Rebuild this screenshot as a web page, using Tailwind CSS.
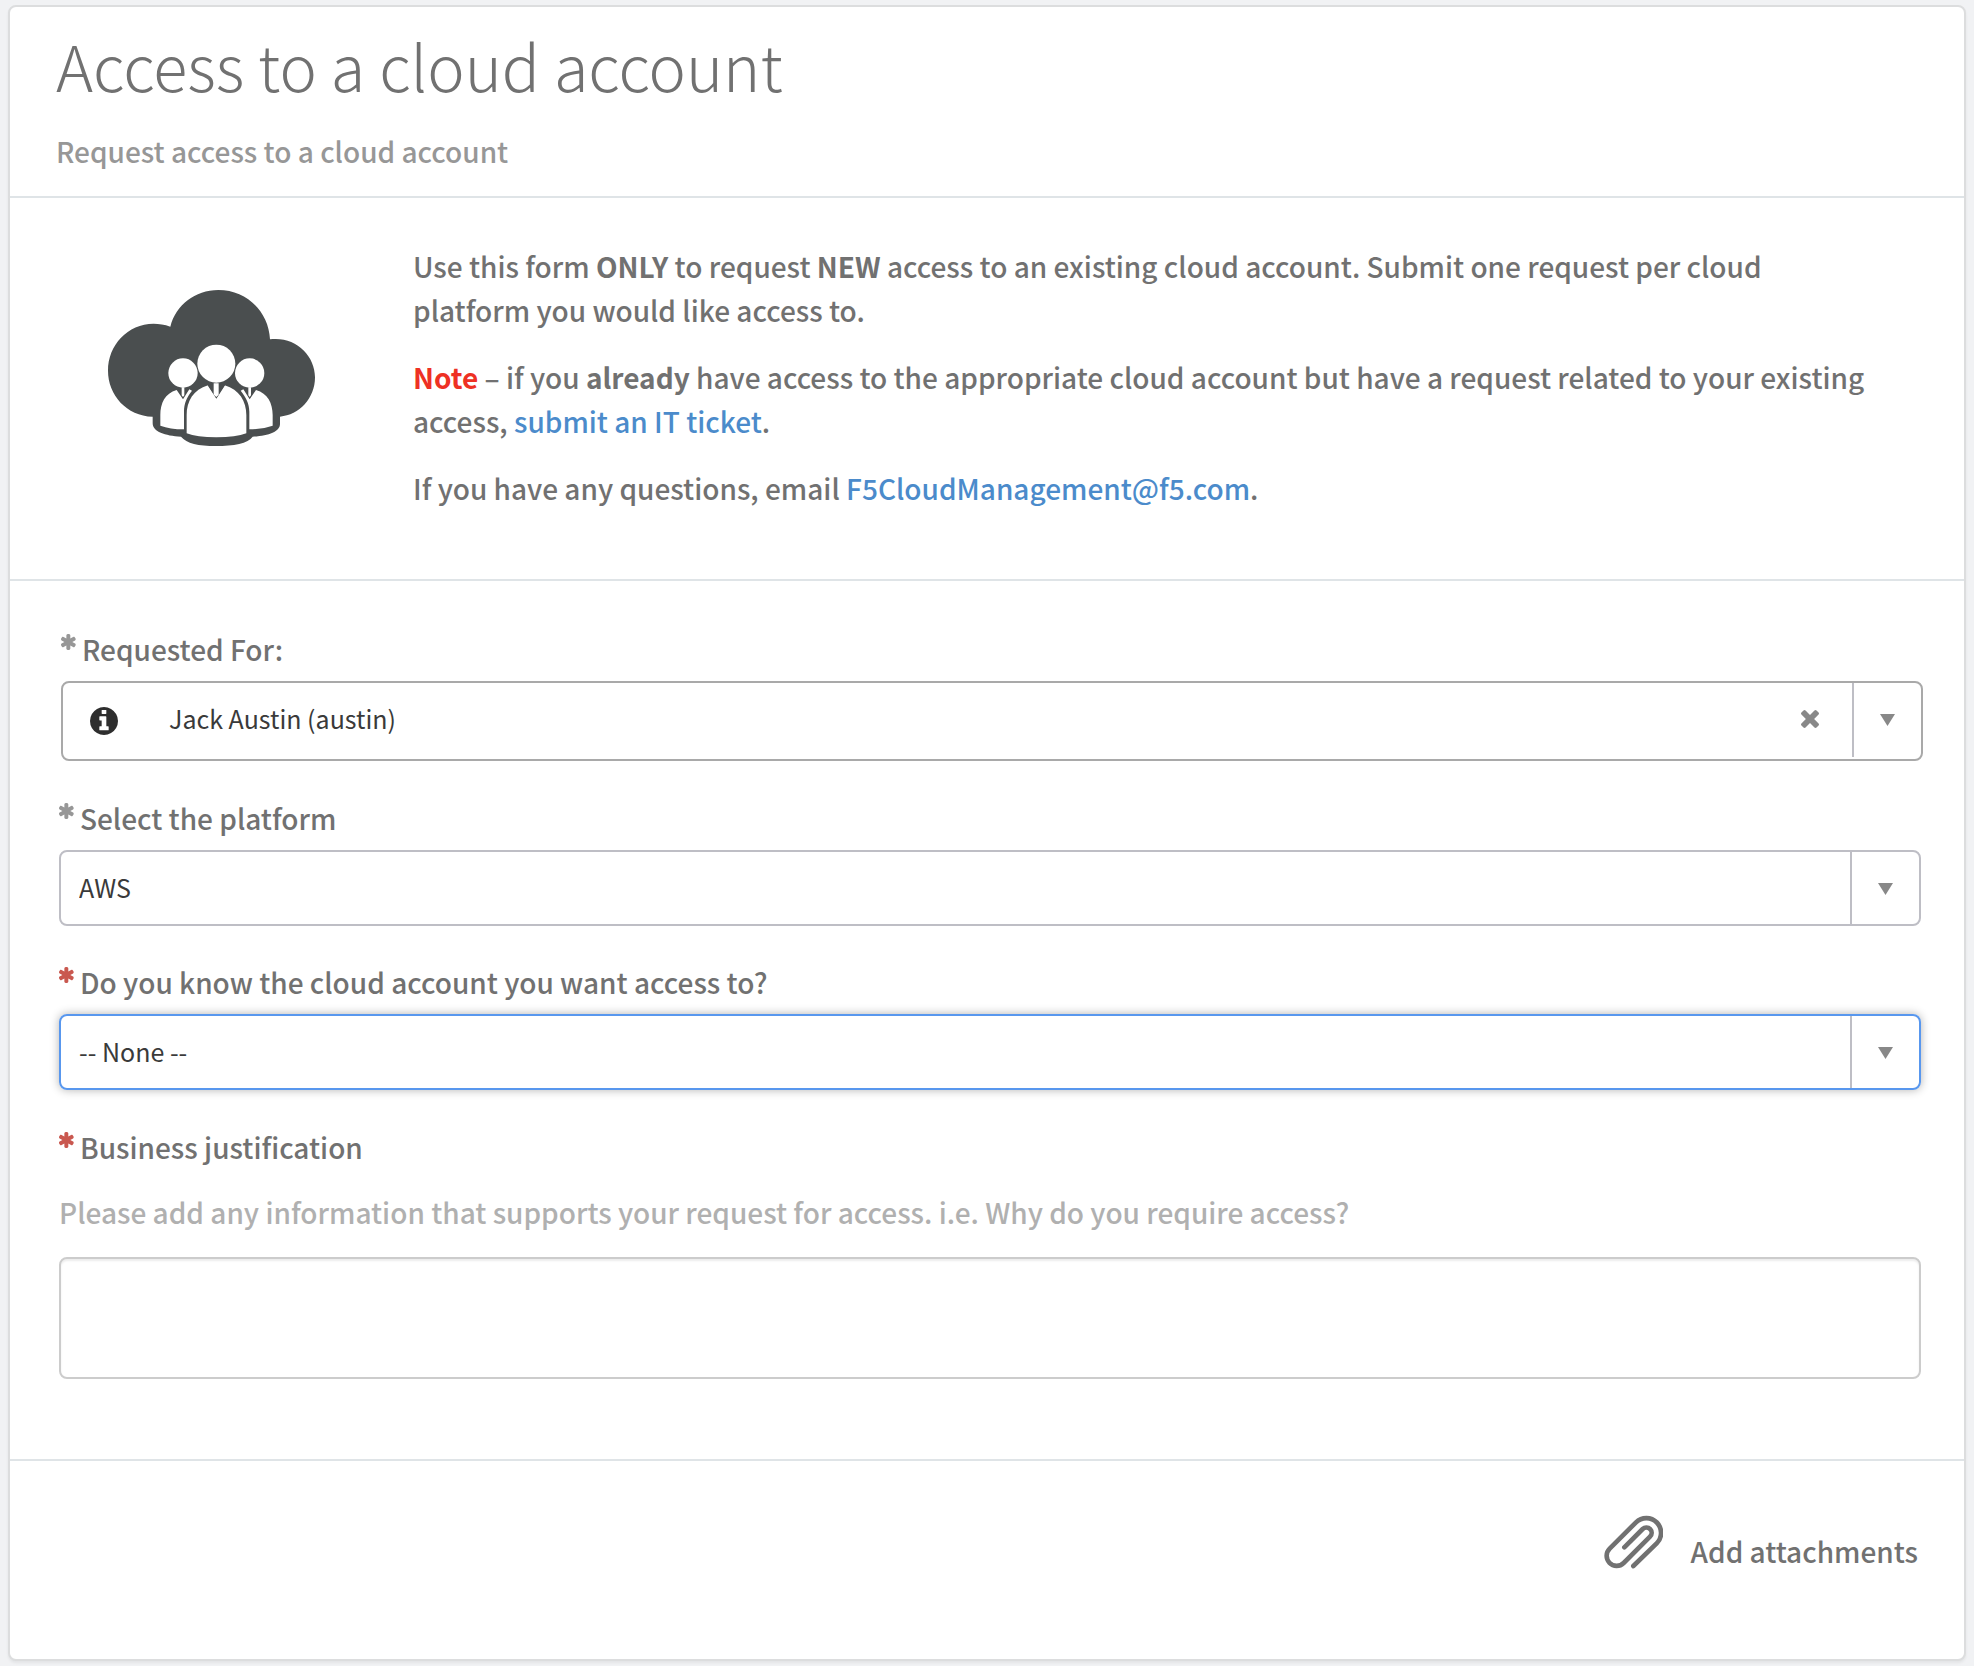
<!DOCTYPE html>
<html lang="en">
<head>
<meta charset="utf-8">
<title>Access to a cloud account</title>
<script src="https://cdn.jsdelivr.net/npm/@tailwindcss/browser@4"></script>
</head>
<body class="min-h-screen bg-[#f1f2f4] px-2 pt-[5px] pb-[5px] font-['Noto_Sans_CJK_SC','Noto_Sans',sans-serif] text-[28px] leading-[44px] font-medium text-[#717171]">
<svg class="hidden" aria-hidden="true">
  <symbol id="asterisk" viewBox="121 128 1550 1536"><path fill="currentColor" d="M1482 1050q46 26 59.500 77.500t-12.500 97.500l-64 110q-26 46-77.500 59.500t-97.500-12.500l-266-153v307q0 52-38 90t-90 38h-128q-52 0-90-38t-38-90v-307l-266 153q-46 26-97.500 12.500t-77.500-59.500l-64-110q-26-46-12.500-97.500t59.500-77.500l266-154-266-154q-46-26-59.500-77.500t12.500-97.500l64-110q26-46 77.500-59.500t97.500 12.500l266 153v-307q0-52 38-90t90-38h128q52 0 90 38t38 90v307l266-153q46-26 97.500-12.500t77.500 59.500l64 110q26 46 12.500 97.500t-59.500 77.500l-266 154z"/></symbol>
  <symbol id="caret" viewBox="0 0 15 12"><path fill="currentColor" d="M0 0h15L7.500 12z"/></symbol>
</svg>
<main class="rounded-lg border-2 border-[#dcddde] bg-white shadow-[0_2px_3px_rgba(0,0,0,0.06)]">
  <header class="border-b-2 border-[#dfe4e7] px-[46px] pt-[18px] pb-[23px]">
    <h1 class="text-[63px] leading-[80px] font-light">Access to a cloud account</h1>
    <p class="mt-6 text-[#979797]">Request access to a cloud account</p>
  </header>

  <section class="flex border-b-2 border-[#dfe4e7] pt-[46px] pr-[88px] pb-[69px] pl-[98px]">
    <svg class="mt-[46px] mr-[98px] h-[156px] w-[207px] shrink-0" viewBox="84 90 621 468" role="img" aria-label="Cloud users">
      <path fill="#4a4e4f" d="M271 200C288 135 345 90 415 90C500 90 566 155 570 238C645 228 705 285 705 352C705 415 658 465 600 470V492C600 515 565 528 518 530C505 550 460 558 408 558C355 558 320 550 303 530C255 528 218 515 218 490V470C140 468 84 405 84 332C84 240 170 165 271 200Z"/>
      <g fill="#fff">
        <circle cx="309" cy="339" r="44"/><circle cx="509" cy="339" r="44"/>
        <path d="M290 390C255 400 241 430 241 465V497Q270 508 312 508V455C312 430 320 412 336 392L328 388L309 418Z"/>
        <path d="M528 390C563 400 578 430 578 465V497Q548 508 508 508V455C508 430 498 412 482 392L490 388L509 418Z"/>
      </g>
      <circle cx="409" cy="311" r="57" fill="#fff"/>
      <path fill="#fff" d="M384 376C340 388 320 425 320 465V520Q350 532 409 532Q468 532 499 520V465C499 425 478 388 434 376L409 414Z"/>
      <path fill="#4a4e4f" d="M382 374L409 416L436 374ZM293 385L309 415L325 385Z M493 385L509 415L525 385Z"/>
      <path fill="#fff" d="M401 370H416V404L409 411L401 404ZM305 382H313V406L309 411L305 406ZM505 382H513V406L509 411L505 406Z"/>
    </svg>
    <div class="flex flex-col gap-[23px]">
      <p>Use this form <strong class="font-bold">ONLY</strong> to request <strong class="font-bold">NEW</strong> access to an existing cloud account. Submit one request per cloud platform you would like access to.</p>
      <p><strong class="font-bold text-[#ee3124]">Note</strong> – if you <strong class="font-bold">already</strong> have access to the appropriate cloud account but have a request related to your existing access, <a href="#ticket" class="text-[#4b8bcb]">submit an IT ticket</a>.</p>
      <p>If you have any questions, email <a href="mailto:F5CloudManagement@f5.com" class="text-[#4b8bcb]">F5CloudManagement@f5.com</a>.</p>
    </div>
  </section>

  <form>
    <div class="border-b-2 border-[#dfe4e7] pt-12 pr-[43px] pb-20 pl-[49px]">
      <div class="ml-[2px] -mr-[2px]">
        <label for="requested-for" class="flex gap-[5px] leading-10"><svg class="mt-[5px] size-4 text-[#979797]"><use href="#asterisk"/></svg>Requested For:</label>
        <div class="relative mt-3 h-20 rounded-lg border-2 border-[#a9a9a9]">
          <select id="requested-for" class="h-full w-full appearance-none bg-transparent pr-[140px] pb-[6px] pl-[106px] text-[25px] leading-9 font-normal text-[#3a3a3a] outline-none"><option>Jack Austin (austin)</option></select>
          <button type="button" aria-label="User details" class="absolute top-6 left-[27px] text-[#2e2e2e]"><svg class="block size-7" viewBox="128 128 1536 1536"><path fill="currentColor" d="M1152 1376v-160q0-14-9-23t-23-9h-96v-512q0-14-9-23t-23-9h-320q-14 0-23 9t-9 23v160q0 14 9 23t23 9h96v320h-96q-14 0-23 9t-9 23v160q0 14 9 23t23 9h448q14 0 23-9t9-23zm-128-896v-160q0-14-9-23t-23-9h-192q-14 0-23 9t-9 23v160q0 14 9 23t23 9h192q14 0 23-9t9-23zm640 416q0 209-103 385.500t-279.500 279.500-385.500 103-385.500-103-279.500-279.500-103-385.500 103-385.500 279.500-279.500 385.500-103 385.500 103 279.500 279.500 103 385.500z"/></svg></button>
          <button type="button" aria-label="Clear" class="absolute top-[27px] right-[102px] text-[#888]"><svg class="block size-[18px]" viewBox="302 366 1188 1188"><path fill="currentColor" d="M1490 1322q0 40-28 68l-136 136q-28 28-68 28t-68-28l-294-294-294 294q-28 28-68 28t-68-28l-136-136q-28-28-28-68t28-68l294-294-294-294q-28-28-28-68t28-68l136-136q28-28 68-28t68 28l294 294 294-294q28-28 68-28t68 28l136 136q28 28 28 68t-28 68l-294 294 294 294q28 28 28 68z"/></svg></button>
          <span class="pointer-events-none absolute top-0 right-0 flex h-[74px] w-[69px] items-center justify-center border-l-2 border-[#bebec5] text-[#888]"><svg class="h-3 w-[15px]"><use href="#caret"/></svg></span>
        </div>
      </div>

      <div class="mt-[37px]">
        <label for="platform" class="flex gap-[5px] leading-10"><svg class="mt-[5px] size-4 text-[#979797]"><use href="#asterisk"/></svg>Select the platform</label>
        <div class="relative mt-3 h-[76px] rounded-lg border-2 border-[#bebec5]">
          <select id="platform" class="h-full w-full appearance-none bg-transparent pr-20 pb-[2px] pl-[18px] text-[25px] leading-9 font-normal text-[#3a3a3a] outline-none"><option>AWS</option></select>
          <span class="pointer-events-none absolute inset-y-0 right-0 flex w-[69px] items-center justify-center border-l-2 border-[#bebec5] pt-px text-[#888]"><svg class="h-3 w-[15px]"><use href="#caret"/></svg></span>
        </div>
      </div>

      <div class="mt-9">
        <label for="know-account" class="flex gap-[5px] leading-10"><svg class="mt-[5px] size-4 text-[#c9584f]"><use href="#asterisk"/></svg>Do you know the cloud account you want access to?</label>
        <div class="relative mt-3 h-[76px] rounded-lg border-2 border-[#5897ee] shadow-[0_0_10px_rgba(0,0,0,0.3)]">
          <select id="know-account" class="h-full w-full appearance-none bg-transparent pr-20 pb-[2px] pl-[18px] text-[25px] leading-9 font-normal text-[#3a3a3a] outline-none"><option>-- None --</option></select>
          <span class="pointer-events-none absolute inset-y-0 right-0 flex w-[69px] items-center justify-center border-l-2 border-[#bebec5] pt-px text-[#888]"><svg class="h-3 w-[15px]"><use href="#caret"/></svg></span>
        </div>
      </div>

      <div class="mt-[37px]">
        <label for="justification" class="flex gap-[5px] leading-10"><svg class="mt-[5px] size-4 text-[#c9584f]"><use href="#asterisk"/></svg>Business justification</label>
        <p id="justification-hint" class="mt-[25px] leading-10 text-[#b0b0b0]">Please add any information that supports your request for access. i.e. Why do you require access?</p>
        <textarea id="justification" aria-describedby="justification-hint" class="mt-[25px] block h-[122px] w-full resize-none rounded-lg border-2 border-[#ccc] px-[18px] py-3 text-[25px] leading-9 font-normal text-[#3a3a3a] shadow-[inset_0_2px_2px_rgba(0,0,0,0.075)] outline-none"></textarea>
      </div>
    </div>

    <div class="flex justify-end pt-[54px] pr-[46px] pb-[88px]">
      <button type="button" class="flex gap-7"><svg class="h-[54px] w-[59px]" viewBox="70 225 177 160" fill="none" stroke="currentColor" stroke-width="14" stroke-linecap="round"><path d="M158 377L228 309A43 43 0 0 0 166 246L87 325A30 30 0 0 0 129 368L208 289A15.500 15.500 0 0 0 186 266L131 321"/></svg><span class="mt-4 leading-10">Add attachments</span></button>
    </div>
  </form>
</main>
</body>
</html>
